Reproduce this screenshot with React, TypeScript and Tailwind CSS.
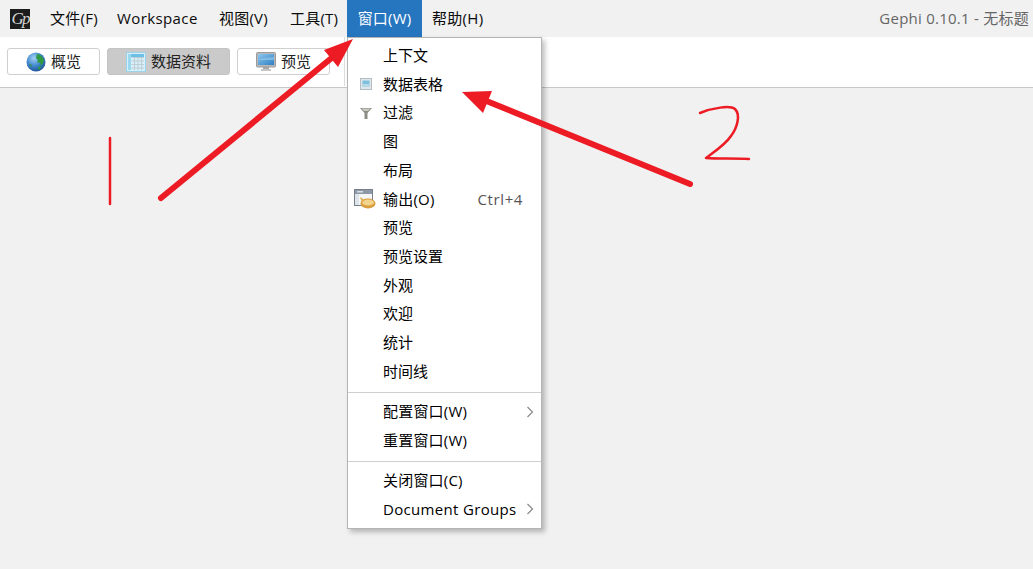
import React from "react";

const FONT = "font-['Open_Sans','Noto_Sans_CJK_SC',sans-serif]";

function Logo() {
  return (
    <div className="w-5 h-5 bg-[#1c1c1c] flex items-center justify-center overflow-hidden font-['Liberation_Serif',serif] italic text-[17px] leading-none text-[#d4d4d4] tracking-[-2px]">
      Gp
    </div>
  );
}

function Globe() {
  return (
    <svg width="20" height="20" viewBox="0 0 20 20">
      <defs>
        <radialGradient id="gl" cx="40%" cy="30%" r="75%">
          <stop offset="0%" stopColor="#a4d2f4" />
          <stop offset="55%" stopColor="#3f86cc" />
          <stop offset="100%" stopColor="#1d4f8f" />
        </radialGradient>
      </defs>
      <circle cx="10" cy="10" r="9.500" fill="url(#gl)" />
      <path d="M11 2c3 0 6 3 7 6l-1 3-2 3-1-3-3-1 1-2-2-2z" fill="#2f9a42" />
      <path d="M13 14l2 1-2 3-1-2z" fill="#2f9a42" />
      <path d="M3 12l2 0 1 2-1 1z" fill="#3f8f5a" />
    </svg>
  );
}

function TableIcon() {
  return (
    <svg width="20" height="20" viewBox="0 0 20 20">
      <rect x="0.500" y="0.500" width="19" height="19" fill="#d8eef8" stroke="#9ad4ec" />
      <rect x="2" y="2" width="16" height="3" fill="#6cc0e6" />
      <rect x="2" y="2" width="3" height="16" fill="#9ad8f0" />
      <path d="M5.500 5.500h12.500M5.500 9h12.500M5.500 12.500h12.500M5.500 16h12.500M8.500 5v13M12 5v13M15.500 5v13" stroke="#bccdd4" strokeWidth="1" />
    </svg>
  );
}

function MonitorIcon() {
  return (
    <svg width="20" height="20" viewBox="0 0 20 20">
      <defs>
        <linearGradient id="mo" x1="0" y1="0" x2="1" y2="1">
          <stop offset="0%" stopColor="#8ec8ee" />
          <stop offset="100%" stopColor="#2f7fc4" />
        </linearGradient>
      </defs>
      <rect x="7" y="14" width="6" height="4" fill="#a8a8a8" />
      <rect x="5" y="17" width="10" height="2" fill="#c4c4c4" />
      <rect x="0.500" y="0.500" width="19" height="14.500" rx="1" fill="#b8b8b8" stroke="#9a9a9a" />
      <rect x="2" y="2" width="16" height="11" fill="url(#mo)" />
      <path d="M2 8c5-2 10-2 16-3v3H2z" fill="#a9d6f2" opacity="0.5" />
    </svg>
  );
}

function SmallTableIcon() {
  return (
    <svg width="12" height="12" viewBox="0 0 12 12">
      <rect x="0.500" y="0.500" width="11" height="11" fill="#dfe6ea" stroke="#b4bec4" />
      <rect x="2.500" y="2.500" width="7" height="6" fill="#7cc0dd" />
      <rect x="2.500" y="6" width="7" height="2.500" fill="#b5dbe9" />
    </svg>
  );
}

function FilterIcon() {
  return (
    <svg width="12" height="12" viewBox="0 0 12 12">
      <path d="M0 1h12L7.500 6v6h-3V6z" fill="#8c8c84" />
      <path d="M1.500 1.500h9L8 4H4z" fill="#c8c8c0" />
    </svg>
  );
}

function OutputIcon() {
  return (
    <svg width="23" height="20" viewBox="0 0 23 20">
      <rect x="0.500" y="0.500" width="18" height="16" fill="#f4f6f8" stroke="#77808a" />
      <rect x="1" y="1" width="17" height="4" fill="#8d99a6" />
      <rect x="3" y="2" width="6" height="1.500" fill="#d8dde2" />
      <rect x="1" y="5" width="4" height="11" fill="#dfe4ea" />
      <ellipse cx="14" cy="14.500" rx="7.500" ry="5" fill="#d99f3e" />
      <ellipse cx="14" cy="13.500" rx="6" ry="3" fill="#f2d48c" />
      <path d="M6 8l5 3-3 3z" fill="#e2b155" />
    </svg>
  );
}

function Chevron() {
  return (
    <svg width="8" height="12" viewBox="0 0 8 12" fill="none" stroke="#8a8a8a" strokeWidth="1.200">
      <path d="M1.500 1l5 5-5 5" />
    </svg>
  );
}

function MenuRow({
  label,
  icon,
  shortcut,
  arrow,
  labelClass = "text-[15px]",
}: {
  label: string;
  icon?: React.ReactNode;
  shortcut?: string;
  arrow?: boolean;
  labelClass?: string;
}) {
  return (
    <div className="flex items-center h-[28.700px]">
      <div className="w-[35px] shrink-0 flex items-center justify-center">{icon}</div>
      <span className={`text-black whitespace-nowrap ${labelClass}`}>{label}</span>
      {shortcut && <span className="ml-auto mr-[18px] text-[#555555] text-[15px] tracking-[0.6px]">{shortcut}</span>}
      {arrow && (
        <span className="ml-auto mr-[7px] flex items-center">
          <Chevron />
        </span>
      )}
    </div>
  );
}

function TabButton({
  icon,
  label,
  active,
  className,
}: {
  icon: React.ReactNode;
  label: string;
  active?: boolean;
  className: string;
}) {
  return (
    <div
      className={`h-[27px] flex items-center justify-center gap-[5px] rounded-[3px] border ${
        active ? "bg-[#cacaca] border-[#c4c4c4]" : "bg-white border-[#cfcfcf]"
      } ${className}`}
    >
      {icon}
      <span className="text-[#222222] text-[15px]">{label}</span>
    </div>
  );
}

export default function App() {
  const rows: { label: string; icon?: React.ReactNode; shortcut?: string; labelClass?: string }[] = [
    { label: "上下文" },
    { label: "数据表格", icon: <SmallTableIcon /> },
    { label: "过滤", icon: <FilterIcon /> },
    { label: "图" },
    { label: "布局" },
    { label: "输出(O)", icon: <OutputIcon />, shortcut: "Ctrl+4", labelClass: "text-[15px] tracking-[0.2px]" },
    { label: "预览" },
    { label: "预览设置" },
    { label: "外观" },
    { label: "欢迎" },
    { label: "统计" },
    { label: "时间线" },
  ];

  const topText = "text-[#0a0a0a] text-[15px] whitespace-nowrap";

  return (
    <div className={`relative w-[1033px] h-[569px] overflow-hidden bg-[#f1f1f1] ${FONT}`}>
      {/* Menu bar */}
      <div className="h-[37px] flex items-center">
        <div className="w-[40px] pl-[10px] shrink-0">
          <Logo />
        </div>
        <div className={`w-[67px] pl-[10px] tracking-[0.3px] ${topText}`}>文件(F)</div>
        <div className={`w-[102px] pl-[10px] tracking-[0.4px] ${topText}`}>Workspace</div>
        <div className={`w-[71px] pl-[10px] tracking-[0.2px] ${topText}`}>视图(V)</div>
        <div className={`w-[67px] pl-[10px] tracking-[0.2px] ${topText}`}>工具(T)</div>
        <div className="h-full flex items-center justify-center w-[75px] bg-[#2675bf] text-white text-[15px] tracking-[0.2px] whitespace-nowrap">
          窗口(W)
        </div>
        <div className={`pl-[10px] tracking-[0.3px] ${topText}`}>帮助(H)</div>
        <div className="ml-auto pr-[4px] text-[#666666] text-[15px] tracking-[0.25px] whitespace-nowrap">Gephi 0.10.1 - 无标题</div>
      </div>

      {/* Toolbar */}
      <div className="h-[51px] bg-white border-b border-[#c8c8c8] flex items-center gap-[7px] pl-[7px] pb-[1px]">
        <TabButton className="w-[93px]" icon={<Globe />} label="概览" />
        <TabButton className="w-[123px]" active icon={<TableIcon />} label="数据资料" />
        <TabButton className="w-[93px]" icon={<MonitorIcon />} label="预览" />
        <div className="h-full w-px bg-[#dddddd] ml-[7px] self-start" />
      </div>

      {/* Dropdown menu */}
      <div className="absolute left-[347px] top-[37px] w-[195px] h-[492px] bg-white border border-[#b4b4b4] shadow-[3px_3px_5px_rgba(0,0,0,0.25)] flex flex-col pt-[3px]">
        {rows.map((r) => (
          <MenuRow key={r.label} label={r.label} icon={r.icon} shortcut={r.shortcut} labelClass={r.labelClass} />
        ))}
        <div className="h-px bg-[#cfcfcf] mt-[7px] mb-[4px]" />
        <MenuRow label="配置窗口(W)" arrow labelClass="text-[15px] tracking-[0.2px]" />
        <MenuRow label="重置窗口(W)" labelClass="text-[15px] tracking-[0.2px]" />
        <div className="h-px bg-[#cfcfcf] mt-[6px] mb-[4.500px]" />
        <MenuRow label="关闭窗口(C)" labelClass="text-[15px] tracking-[0.2px]" />
        <MenuRow label="Document Groups" arrow labelClass="text-[15px] tracking-[0.33px]" />
      </div>

      {/* Hand-drawn annotations */}
      <svg className="absolute inset-0 pointer-events-none" width="1033" height="569" viewBox="0 0 1033 569" fill="none">
        <path d="M110 138L110 204" stroke="#ed1c24" strokeWidth="2.500" strokeLinecap="round" />
        <path d="M161 198L334 56" stroke="#ed1c24" strokeWidth="6" strokeLinecap="round" />
        <path d="M353 39L324 50L338 67Z" fill="#ed1c24" />
        <path d="M690 184L484 100" stroke="#ed1c24" strokeWidth="6" strokeLinecap="round" />
        <path d="M462 92L492 91L483 113Z" fill="#ed1c24" />
        <path
          d="M700 113C712 108 730 105 735 109C741 115 737 128 731 136C725 145 714 152 706 158C718 159 735 158 749 159"
          stroke="#ed1c24"
          strokeWidth="2.500"
          strokeLinecap="round"
          strokeLinejoin="round"
        />
      </svg>
    </div>
  );
}
